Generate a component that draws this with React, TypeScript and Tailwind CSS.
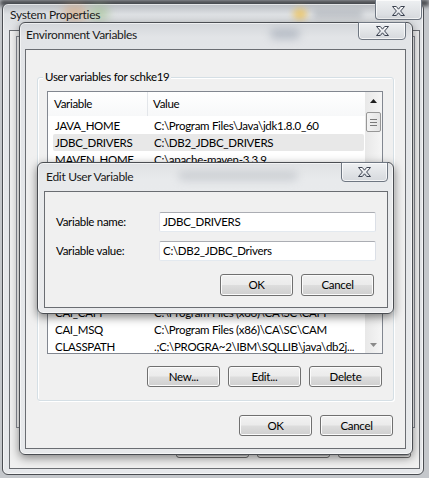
import React from "react";

function XIcon() {
  return (
    <svg width="15" height="12" viewBox="0 0 15 12">
      <defs>
        <linearGradient id="xg" x1="0" y1="0" x2="0" y2="1">
          <stop offset="0" stopColor="#ffffff" />
          <stop offset="1" stopColor="#d6dae0" />
        </linearGradient>
      </defs>
      <path
        d="M1.5 1.5 H5.3 L7.5 4.2 L9.7 1.5 H13.5 L9.6 6 L13.5 10.5 H9.7 L7.5 7.8 L5.3 10.5 H1.5 L5.4 6 Z"
        fill="url(#xg)"
        stroke="#3b4250"
        strokeWidth="1"
        strokeLinejoin="round"
      />
    </svg>
  );
}

function Btn({ label, className }: { label?: string; className: string }) {
  return (
    <div
      className={
        "flex items-center justify-center rounded-[3px] border border-[#707070] bg-[linear-gradient(180deg,#f2f2f2_0%,#ebebeb_48%,#dddddd_52%,#cfcfcf_100%)] shadow-[inset_0_0_0_1px_#fbfbfb] leading-none text-black " +
        className
      }
    >
      {label}
    </div>
  );
}

type Row = { name: string; value: string; sel?: boolean };

const rows: Row[] = [
  { name: "JAVA_HOME", value: "C:\\Program Files\\Java\\jdk1.8.0_60" },
  { name: "JDBC_DRIVERS", value: "C:\\DB2_JDBC_DRIVERS", sel: true },
  { name: "MAVEN_HOME", value: "C:\\apache-maven-3.3.9" },
  { name: "", value: "" },
  { name: "", value: "" },
  { name: "", value: "" },
  { name: "", value: "" },
  { name: "", value: "" },
  { name: "", value: "" },
  { name: "", value: "" },
  { name: "", value: "" },
  { name: "CAI_CAPI", value: "C:\\Program Files (x86)\\CA\\SC\\CAPI" },
  { name: "CAI_MSQ", value: "C:\\Program Files (x86)\\CA\\SC\\CAM" },
  { name: "CLASSPATH", value: ".;C:\\PROGRA~2\\IBM\\SQLLIB\\java\\db2j..." },
];

export default function App() {
  return (
    <div className="relative h-[478px] w-[429px] overflow-hidden bg-[#c4c7cb] font-[Lato,sans-serif] text-[11.5px] tracking-[-0.3px] text-black">
      {/* desktop blur behind */}
      <div className="absolute left-0 top-0 h-[6px] w-[429px] bg-[#3c3e42] blur-[2px]" />

      {/* System Properties window */}
      <div className="absolute left-[2px] top-[3px] h-[472px] w-[422px] rounded-[6px] border border-[#4a4d52] bg-[linear-gradient(180deg,#b9bcc1_0px,#dcdfe2_10px,#e4e6e9_28px,#e6e8eb_100%)] shadow-[inset_0_0_0_1px_rgba(255,255,255,0.6)]">
        <div className="pointer-events-none absolute left-[60px] top-[2px] h-[14px] w-[24px] rounded-full bg-[#d9a070] opacity-60 blur-[5px]" />
        <div className="pointer-events-none absolute left-[86px] top-[2px] h-[14px] w-[20px] rounded-full bg-[#9cc08a] opacity-60 blur-[5px]" />
        <div className="pointer-events-none absolute left-[290px] top-[4px] h-[12px] w-[14px] rounded-full bg-[#f0c04a] opacity-70 blur-[3px]" />
        <div className="pointer-events-none absolute left-[310px] top-[6px] h-[8px] w-[50px] rounded-full bg-[#9aa0a8] opacity-50 blur-[3px]" />
        <div className="relative h-[26px] pl-[7px] pt-[1px] text-[12px] leading-[20px] text-[#1a1a1a]">
          System Properties
        </div>
        <div className="absolute right-[1px] top-[-4px] flex h-[20px] w-[47px] items-center justify-center rounded-b-[4px] border border-t-0 border-[#6f7782] bg-[linear-gradient(180deg,#eef0f2,#d6d9dd)] pt-[2px] shadow-[inset_0_0_0_1px_rgba(255,255,255,0.7)]">
          <XIcon />
        </div>
        {/* client */}
        <div className="ml-[6px] mr-[3px] flex h-[439px] flex-col border border-[#6a6d72] bg-[#f0f0f0] pl-[6px] pr-[4px] pt-[5px]">
          <div className="h-[392px] border border-[#898c95] bg-[#fbfbfb]" />
          <div className="mt-[8px] flex justify-end gap-[8px] pr-[4px]">
            <Btn className="h-[22px] w-[73px]" />
            <Btn className="h-[22px] w-[73px]" />
            <Btn className="h-[22px] w-[73px]" />
          </div>
        </div>
      </div>

      {/* Environment Variables window */}
      <div className="absolute left-[19px] top-[22px] flex h-[433px] w-[394px] flex-col rounded-[6px] border border-[#4a4d52] bg-[linear-gradient(180deg,#d3d6da_0px,#e2e4e7_14px,#e7e9eb_100%)] shadow-[0_3px_10px_rgba(0,0,0,0.45),inset_0_0_0_1px_rgba(255,255,255,0.6)]">
        <div className="pointer-events-none absolute left-[250px] top-[6px] h-[10px] w-[30px] rounded-full bg-[#8c96a6] opacity-50 blur-[4px]" />
        <div className="relative h-[26px] pl-[6px] pt-[2px] text-[12px] leading-[20px] text-[#1a1a1a]">
          Environment Variables
        </div>
        <div className="absolute right-[6px] top-[-1px] flex h-[18px] w-[48px] items-center justify-center rounded-b-[4px] border border-[#6f7782] bg-[linear-gradient(180deg,#eef0f2,#d6d9dd)] shadow-[inset_0_0_0_1px_rgba(255,255,255,0.7)]">
          <XIcon />
        </div>
        {/* client */}
        <div className="ml-[5px] mr-[6px] flex h-[400px] flex-col border border-[#6a6d72] bg-[#f0f0f0]">
          {/* group box */}
          <div className="relative ml-[11px] mt-[27px] flex h-[324px] w-[357px] flex-col rounded-[3px] border border-[#d5dfe5] shadow-[1px_1px_0_#ffffff,inset_1px_1px_0_#ffffff]">
            <div className="absolute left-[5px] top-[-9px] bg-[#f0f0f0] px-[2px] leading-[16px]">
              User variables for schke19
            </div>
            {/* list */}
            <div className="ml-[9px] mt-[13px] flex h-[263px] w-[336px] border border-[#828790] bg-white">
              <div className="flex min-w-0 flex-1 flex-col overflow-hidden">
                <div className="flex h-[24px] shrink-0 items-center bg-[linear-gradient(180deg,#ffffff,#f7f8f9)] leading-[16px]">
                  <div className="h-full w-[100px] border-r border-[#e3e6ea] pl-[6px] pt-[4px]">Variable</div>
                  <div className="h-full pl-[5px] pt-[4px]">Value</div>
                </div>
                <div className="flex flex-col pt-[1px]">
                  {rows.map((r, i) => (
                    <div
                      key={i}
                      className={
                        r.sel
                          ? "ml-[5px] mr-[1px] flex h-[17px] shrink-0 items-center rounded-[2px] bg-[#e8e8e8] leading-[17px]"
                          : "ml-[5px] mr-[1px] flex h-[17px] shrink-0 items-center leading-[17px]"
                      }
                    >
                      <div className="w-[95px] shrink-0 whitespace-nowrap pl-[2px]">{r.name}</div>
                      <div className="min-w-0 flex-1 overflow-hidden whitespace-nowrap pl-[6px]">{r.value}</div>
                    </div>
                  ))}
                </div>
              </div>
              {/* scrollbar */}
              <div className="flex w-[17px] shrink-0 flex-col bg-[linear-gradient(90deg,#e8e8e8,#f5f5f5)]">
                <div className="flex h-[17px] items-center justify-center">
                  <svg width="7" height="4" viewBox="0 0 7 4">
                    <path d="M3.5 0 L7 4 H0 Z" fill="#1e1e1e" />
                  </svg>
                </div>
                <div className="mx-[1px] mt-[3px] flex h-[20px] flex-col items-center justify-center gap-[2px] rounded-[2px] border border-[#979797] bg-[linear-gradient(90deg,#f3f3f3,#e4e4e4)]">
                  <div className="h-px w-[7px] bg-[#7a7a7a]" />
                  <div className="h-px w-[7px] bg-[#7a7a7a]" />
                  <div className="h-px w-[7px] bg-[#7a7a7a]" />
                </div>
                <div className="flex-1" />
                <div className="flex h-[17px] items-center justify-center">
                  <svg width="7" height="4" viewBox="0 0 7 4">
                    <path d="M0 0 H7 L3.5 4 Z" fill="#8a8a8a" />
                  </svg>
                </div>
              </div>
            </div>
            <div className="mr-[11px] mt-[12px] flex justify-end gap-[8px]">
              <Btn label="New..." className="h-[21px] w-[73px]" />
              <Btn label="Edit..." className="h-[21px] w-[73px]" />
              <Btn label="Delete" className="h-[21px] w-[73px]" />
            </div>
          </div>
          <div className="mr-[12px] mt-[14px] flex justify-end gap-[8px]">
            <Btn label="OK" className="h-[21px] w-[73px]" />
            <Btn label="Cancel" className="h-[21px] w-[73px]" />
          </div>
        </div>
      </div>

      {/* Edit User Variable dialog */}
      <div className="absolute left-[37px] top-[162px] flex h-[152px] w-[357px] flex-col rounded-[6px] border border-[#4a4d52] bg-[linear-gradient(180deg,#dfe1e4_0px,#e8eaec_16px,#eaebed_100%)] shadow-[0_3px_10px_rgba(0,0,0,0.5),inset_0_0_0_1px_rgba(255,255,255,0.6)]">
        <div className="pointer-events-none absolute left-[140px] top-[8px] h-[10px] w-[120px] rounded-full bg-[#a6abb3] opacity-40 blur-[4px]" />
        <div className="relative h-[28px] pl-[8px] pt-[4px] text-[12px] leading-[20px] text-[#1a1a1a]">
          Edit User Variable
        </div>
        <div className="absolute right-[5px] top-[-1px] flex h-[20px] w-[47px] items-center justify-center rounded-b-[4px] border border-[#6f7782] bg-[linear-gradient(180deg,#eef0f2,#d6d9dd)] shadow-[inset_0_0_0_1px_rgba(255,255,255,0.7)]">
          <XIcon />
        </div>
        <div className="ml-[6px] mr-[5px] flex h-[117px] flex-col border border-[#6a6d72] bg-[#f0f0f0] pl-[11px] pr-[11px] pt-[20px]">
          <div className="flex h-[20px] items-center">
            <div className="w-[103px] shrink-0">Variable name:</div>
            <div className="flex h-[20px] w-[217px] items-center rounded-[2px] border border-[#abadb3] border-b-[#e3e9ef] border-l-[#e2e3ea] border-r-[#dbdfe6] bg-white pl-[3px]">
              JDBC_DRIVERS
            </div>
          </div>
          <div className="mt-[9px] flex h-[20px] items-center">
            <div className="w-[103px] shrink-0">Variable value:</div>
            <div className="flex h-[20px] w-[217px] items-center rounded-[2px] border border-[#abadb3] border-b-[#e3e9ef] border-l-[#e2e3ea] border-r-[#dbdfe6] bg-white pl-[3px]">
              C:\DB2_JDBC_Drivers
            </div>
          </div>
          <div className="mr-[2px] mt-[13px] flex justify-end gap-[8px]">
            <Btn label="OK" className="h-[22px] w-[73px]" />
            <Btn label="Cancel" className="h-[22px] w-[73px]" />
          </div>
        </div>
      </div>
    </div>
  );
}
